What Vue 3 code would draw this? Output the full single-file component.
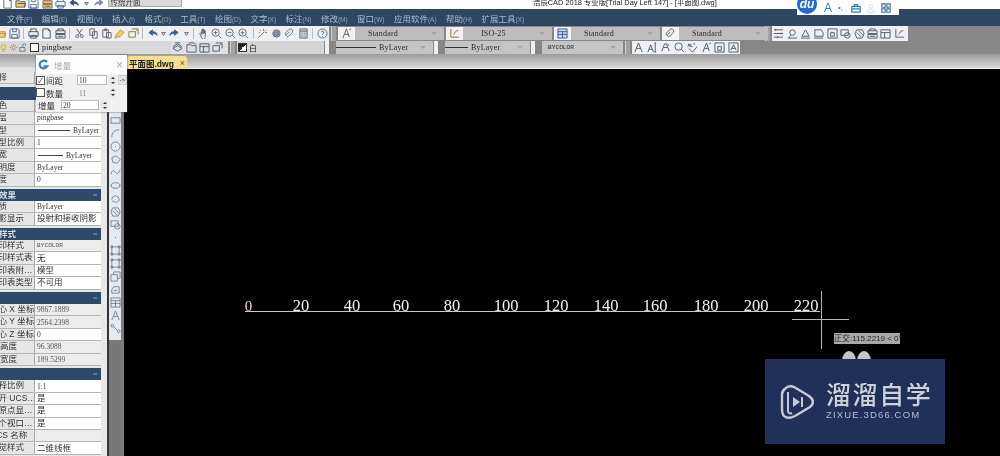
<script setup>
import { h } from 'vue'

// small toolbar glyphs, all on a 12x12 box
const paths = {
  open: 'M1 3h4l1 1h5v6H1zM3 6h9l-2 4',
  save: 'M2 1h8l1 1v9H1V2zM4 1v3h4V1M3 7h6v4H3z',
  print: 'M3 4V1h6v3M1 4h10v5H1zM3 8h6v3H3z',
  doc: 'M2 1h6l2 2v8H2zM8 1v2h2',
  plot: 'M3 3V1h6v2M1 3h10v3H1zM1 7h10v4H1zM3 9h6',
  cut: 'M3 1l5 7M9 1L4 8M2 9a1.5 1.5 0 1 0 3 0a1.5 1.5 0 1 0-3 0M7 9a1.5 1.5 0 1 0 3 0a1.5 1.5 0 1 0-3 0',
  copy: 'M2 1h5v7H2zM5 4h5v7H5z',
  paste: 'M2 2h6v8H2zM4 1h2v2H4zM6 5h5v6H6z',
  brush: 'M2 8l5-6 4 3-5 5zM2 8l-1 3 3-1',
  block: 'M1 4h7v6H1zM4 1h7v6M8 4l2-2',
  undo: 'M2 5l4-3v2c3 0 5 1 5 4c-1-2-3-2-5-2v2z',
  redo: 'M10 5L6 2v2C3 4 1 5 1 8c1-2 3-2 5-2v2z',
  dd: 'M4 5h4L6 8z',
  hand: 'M4 11L2 6l1-1 1 2V2h1v4-5h1v5-4h1v4-3h1v6l-1 4z',
  zoom: 'M1 5a4 4 0 1 0 8 0a4 4 0 1 0-8 0M8 8l3 3M3 5h4M5 3v4',
  zoomb: 'M1 5a4 4 0 1 0 8 0a4 4 0 1 0-8 0M8 8l3 3M3 5h4',
  wand: 'M1 11L8 4M7 1v2M10 2L9 3M11 5H9M3 2l1 1M2 5h1',
  gear: 'M2 6a4 4 0 1 0 8 0a4 4 0 1 0-8 0M4 6a2 2 0 1 0 4 0a2 2 0 1 0-4 0',
  link: 'M2 8a2 2 0 0 1 0-3l3-3a2 2 0 0 1 4 3l-4 4a1 1 0 0 1-2-2l3-3',
  calc: 'M2 1h8v10H2zM2 3.5h8M4 6h1M7 6h1M4 8.5h1M7 8.5h1',
  help: 'M1 6a5 5 0 1 0 10 0a5 5 0 1 0-10 0M4.5 4.5C5 3 8 3 7.5 5C7 6 6 6 6 7.5M6 9v.6',
  layer: 'M1 7l5-3 5 3-5 3zM1 5l5-3 5 3M3 1h6',
  folder: 'M1 3h4l1 1h5v7H1zM3 1h6l2 2',
  sheet: 'M1 2h10v9H1zM1 5h10M5 5v6',
  dim: 'M1 2h10M1 6h10M1 10h10M3 1v2M9 5v2M5 9v2',
  dimb: 'M3 5a3 3 0 1 0 6 0a3 3 0 1 0-6 0M1 11h10M4 8L2 11',
  tri: 'M2 9l4-7 4 7zM1 11h10',
  rect: 'M2 2h7l2 3v4H2zM1 11h10',
  text: 'M2 11L6 1l4 10M3.5 7h5',
  textb: 'M1 11L4 3l3 8M2 8h4M9 1v10M8 1h2M8 11h2',
  textr: 'M2 10L5 2h2l3 8M4 6h4M8 2l2 2',
  find: 'M1 5a4 4 0 1 0 8 0a4 4 0 1 0-8 0M8 8l3 3',
  abc: 'M1 5l1-3 1 3M4 2v3h2M7 2h2M2 7l4 4 5-6',
  box: 'M1 1h10v10H1zM4 5h4v4H4z',
  boxa: 'M1 1h10v10H1zM3 9l3-6 3 6M4 7h4',
  axis: 'M2 1v9h9M5 7l3-4M8 3h2',
  line: 'M2 10C2 5 5 2 10 2',
  wrect: 'M1 3h10v6H1z',
  circle: 'M1 6a5 5 0 1 0 10 0a5 5 0 1 0-10 0M5.5 6h1',
  poly: 'M2 4l5-2 4 4-3 4-5-1z',
  spline: 'M1 8c2-6 3-4 5-2s3 2 5-3',
  ellipse: 'M1 6c0-4 10-4 10 0s-10 4-10 0M1 6h1M10 6h1',
  arc: 'M2 7c0-5 8-5 8 0c0 3-4 4-6 2M2 9l2 0',
  hatch: 'M3 2h6l2 4-2 5H3L1 6zM3 5l5 5M5 3l5 5',
  region: 'M1 2h8v6H1zM5 8a3 3 0 1 0 6 0a3 3 0 1 0-6 0',
  dot: 'M5.5 6h1M6 5.5v1',
  hatchb: 'M2 2h8v8H2zM1 1h2v2H1zM9 1h2v2H9zM1 9h2v2H1zM9 9h2v2H9z',
  stack: 'M1 4h7v7H1zM4 1h7v7H8M4 4V1',
  draw: 'M2 6l2-3h6v7H2zM4 7h4',
  table: 'M1 1h10v10H1zM1 4h10M6 4v7M1 7h10',
  nodes: 'M1 3a1.5 1.5 0 1 0 3 0a1.5 1.5 0 1 0-3 0M8 9a1.5 1.5 0 1 0 3 0a1.5 1.5 0 1 0-3 0M4 4l4 4',
  style: 'M2 11L6 1M6 1l3 9M4 7h4M9 2l2-1',
  bulb: 'M3 5a3 3 0 1 1 6 0c0 2-1 2-1 4H4c0-2-1-2-1-4M4.5 11h3',
  sun: 'M4 6a2 2 0 1 0 4 0a2 2 0 1 0-4 0M6 1v2M6 9v2M1 6h2M9 6h2M2.5 2.5L4 4M8 8l1.5 1.5M9.5 2.5L8 4M4 8L2.5 9.5',
  lock: 'M1 6h7v5H1zM5 6V3a2 2 0 0 1 4 0v1',
  grid: 'M1 1h4v4H1zM7 1h4v4H7zM1 7h4v4H1zM7 7h4v4H7z',
  bag: 'M1 4h10v7H1zM4 4V2h4v2M1 7h10',
  person: 'M4 4a2 2 0 1 0 4 0a2 2 0 1 0-4 0M2 11c0-5 8-5 8 0z'
}

const blue = '#4c6c92'
const grey = '#5c6068'

const Ic = (p) => h('svg', { class: 'ic', viewBox: '0 0 12 12', width: p.s || 11, height: p.s || 11 }, [
  h('path', { d: paths[p.n], fill: p.f || 'none', stroke: p.c || grey, 'stroke-width': p.w || 1 })
])
Ic.props = ['n', 'c', 'f', 's', 'w']

const quick = [
  { n: 'doc' }, { n: 'open', f: '#e9c86a' }, { n: 'save', c: blue }, { n: 'plot', c: '#8a6a3c', f: '#d9c68c' },
  { n: 'print', c: blue }, { n: 'undo', c: '#2f4f7f', f: '#2f4f7f' }, { n: 'dd' }, { n: 'redo', c: '#8090a8', f: '#8090a8' }
]

const row1Left = [
  [{ n: 'open', c: '#c09030', f: '#eccf7e' }, { n: 'save', c: blue }],
  [{ n: 'print', c: '#47515c' }, { n: 'doc', c: '#47515c' }, { n: 'plot', c: '#47515c' }],
  [{ n: 'cut' }, { n: 'copy' }, { n: 'paste' }, { n: 'brush', c: '#c6a02c', f: '#eccf5e' }, { n: 'block', c: '#8a7a3c' }],
  [{ n: 'undo', c: '#3c5f8c', f: '#3c5f8c' }, { n: 'dd', narrow: 1 }, { n: 'redo', c: '#3c5f8c', f: '#3c5f8c' }, { n: 'dd', narrow: 1 }],
  [{ n: 'hand', c: '#5a6f8c' }, { n: 'zoom', c: '#5a6f8c' }, { n: 'zoomb', c: '#5a6f8c' }, { n: 'zoom', c: '#5a6f8c' }],
  [{ n: 'wand', c: '#7a6a4c' }, { n: 'gear', c: '#5a6f8c', f: '#93a4ba' }, { n: 'link', c: '#5a6f8c' }, { n: 'calc', c: '#5a6f8c', f: '#c4ccd6' }],
  [{ n: 'help', c: '#4a6a8a' }]
]

const row1Dim = ['dim', 'dimb', 'tri', 'rect', 'box', 'region', 'hatch', 'plot', 'sheet', 'axis']
const row2Layer = ['layer', 'folder', 'sheet', 'block']
const row2Text = ['text', 'textb', 'textr', 'find', 'abc', 'style', 'box', 'boxa']
const strip = ['wrect', 'line', 'circle', 'poly', 'spline', 'ellipse', 'arc', 'hatch', 'region', 'dot', 'hatchb', 'hatchb', 'stack', 'draw', 'table', 'text', 'nodes']

const menus = [
  ['文件', 'F'], ['编辑', 'E'], ['视图', 'V'], ['插入', 'I'], ['格式', 'O'], ['工具', 'T'], ['绘图', 'D'],
  ['文字', 'X'], ['标注', 'N'], ['修改', 'M'], ['窗口', 'W'], ['应用软件', 'A'], ['帮助', 'H'], ['扩展工具', 'X']
]

const props = [
  { head: 1 },
  { k: '颜色', v: '' },
  { k: '图层', v: 'pingbase', sb: 1 },
  { k: '线型', v: 'ByLayer', ln: 32 },
  { k: '线型比例', v: '1' },
  { k: '线宽', v: 'ByLayer', ln: 25 },
  { k: '透明度', v: 'ByLayer' },
  { k: '厚度', v: '0' },
  { head: 1, k: '效果', gap: 1 },
  { k: '材质', v: 'ByLayer' },
  { k: '阴影显示', v: '投射和接收阴影' },
  { head: 1, k: '样式', gap: 1 },
  { k: '打印样式', v: 'BYCOLOR', off: 1, caps: 1 },
  { k: '打印样式表', v: '无' },
  { k: '打印表附…', v: '模型' },
  { k: '打印表类型', v: '不可用' },
  { head: 1, gap: 1 },
  { k: '圆心 X 坐标', v: '9867.1889', off: 1 },
  { k: '圆心 Y 坐标', v: '2564.2398', off: 1 },
  { k: '圆心 Z 坐标', v: '0' },
  { k: '高度', v: '96.3088', flush: 1, off: 1 },
  { k: '宽度', v: '189.5299', flush: 1, off: 1 },
  { head: 1, gap: 1 },
  { k: '注释比例', v: '1:1', small: 1 },
  { k: '打开 UCS…', v: '是' },
  { k: '在原点显…', v: '是' },
  { k: '每个视口…', v: '是' },
  { k: 'UCS 名称', v: '', off: 1 },
  { k: '视觉样式', v: '二维线框' }
]

const ruler = [
  ['20', 301], ['40', 352], ['60', 401], ['80', 452], ['100', 506], ['120', 556],
  ['140', 606], ['160', 655], ['180', 706], ['200', 756], ['220', 806]
]
</script>

<template>
  <div class="app">
    <div class="titlebar">
      <div class="quick">
        <span v-for="(q, i) in quick" :key="i" class="slot"><Ic v-bind="q" /></span>
        <span class="qcombo">传统开面</span>
      </div>
      <div class="title">浩辰CAD 2018 专业版[Trial Day Left 147] - [平面图.dwg]</div>
    </div>

    <div class="menu">
      <span v-for="m in menus" :key="m[0]" class="menu-item">{{ m[0] }}<small>({{ m[1] }})</small></span>
    </div>

    <div class="bar bar1">
      <div class="tools left-tools">
        <template v-for="(g, i) in row1Left" :key="i">
          <span v-for="(t, j) in g" :key="j" class="slot" :class="{ narrow: t.narrow }"><Ic v-bind="t" /></span>
          <i v-if="i < row1Left.length - 1" class="sep"></i>
        </template>
      </div>
      <i class="grip"></i>
      <div class="combo-set">
        <span class="cicon"><Ic n="style" c="#5a5a5a" /></span>
        <span class="combo w88">Standard</span>
        <span class="cicon"><Ic n="axis" c="#8a6a2c" /></span>
        <span class="combo w88 iso">ISO-25</span>
        <span class="cicon"><Ic n="table" c="#3a5a9a" f="#c8d6ea" /></span>
        <span class="combo w88">Standard</span>
        <span class="cicon"><Ic n="link" c="#5a6068" /></span>
        <span class="combo w88">Standard</span>
      </div>
      <i class="grip"></i>
      <div class="tools dim-tools">
        <span v-for="(n, i) in row1Dim" :key="i" class="slot"><Ic :n="n" c="#4a5a6c" /></span>
      </div>
    </div>

    <div class="bar bar2">
      <div class="layer-combo">
        <Ic n="bulb" c="#c6a02c" f="#f0dc78" :s="9" />
        <Ic n="sun" c="#9a8a3c" :s="9" />
        <Ic n="lock" c="#4c6c92" :s="9" />
        <b class="sq"></b>
        <span class="serif">pingbase</span>
      </div>
      <div class="tools layer-tools">
        <span v-for="n in row2Layer" :key="n" class="slot"><Ic :n="n" c="#4a5a6c" /></span>
      </div>
      <i class="grip"></i>
      <div class="color-combo"><b class="sq half"></b><span>白</span></div>
      <i class="notch"></i>
      <span class="combo line-combo w104"><u></u>ByLayer</span>
      <i class="notch"></i>
      <span class="combo line-combo w86"><u class="short"></u>ByLayer</span>
      <i class="notch"></i>
      <span class="combo by">BYCOLOR</span>
      <i class="grip"></i>
      <div class="tools text-tools">
        <span v-for="(n, i) in row2Text" :key="i" class="slot"><Ic :n="n" c="#4a5a6c" /></span>
      </div>
    </div>

    <div class="tabrow">
      <div class="tab"><span>平面图.dwg</span><em>×</em></div>
    </div>

    <div class="body">
      <div class="props">
        <div class="prow sel"><span class="k">选择</span><span class="v"></span></div>
        <template v-for="(p, i) in props" :key="i">
          <div v-if="p.head" class="phead" :class="{ gap: p.gap }"><span>{{ p.k }}</span><i></i></div>
          <div v-else class="prow">
            <span class="k" :class="{ flush: p.flush }">{{ p.k }}</span>
            <span class="v" :class="{ off: p.off, latin: /^[\x00-\x7f]*$/.test(p.v), caps: p.caps }">
              <u v-if="p.ln" :style="{ width: p.ln + 'px' }"></u>{{ p.v }}
            </span>
          </div>
        </template>
      </div>
      <div class="side">
        <div class="strip">
          <span v-for="(n, i) in strip" :key="i"><Ic :n="n" c="#66788c" :w="0.9" /></span>
        </div>
      </div>
      <div class="canvas">
        <svg class="drawing" width="876" height="387" viewBox="124 69 876 387">
          <line x1="245" y1="311.5" x2="820" y2="311.5" stroke="#c8c8c8" />
          <text x="248.5" y="311" class="num zero" text-anchor="middle">0</text>
          <text v-for="r in ruler" :key="r[0]" :x="r[1]" y="311" class="num" text-anchor="middle">{{ r[0] }}</text>
          <path d="M821.5 291v58M792 319.5h57" stroke="#b4b4b4" fill="none" />
          <ellipse cx="849" cy="361" rx="7" ry="10" fill="#c2c3c8" />
          <ellipse cx="864" cy="361" rx="7" ry="10" fill="#c2c3c8" />
        </svg>
        <div class="tip">正交:115.2219 &lt; 0°</div>
        <div class="mark">
          <svg class="mark-logo" width="35" height="36" viewBox="0 0 35 36" fill="none" stroke="#c6cad4">
            <path stroke-width="2.4" d="M6 4C9 1 12 2 15 3.5L29 12c5 3.5 5 8 1 11L15 32c-4 2-8 3-11 0C2 30 2 27 2 24V10C2 8 3 6 6 4z" />
            <path stroke-width="2" d="M8 8v19c0 2 2 3 4 2" />
            <path fill="#c6cad4" stroke="none" d="M13 13l7 5-7 5zM21 13h2v10h-2z" />
          </svg>
          <div class="mark-text">
            <div class="mark-cn">溜溜自学</div>
            <div class="mark-en">ZIXUE.3D66.COM</div>
          </div>
        </div>
      </div>
    </div>

    <div class="dialog">
      <div class="dlg-title">
        <svg width="11" height="11" viewBox="0 0 12 12" fill="none" stroke="#2b87c9" stroke-width="2.4"><path d="M10 3C6 0 1 3 2 7s6 4 8 1H6" /></svg>
        <span>增量</span>
        <em>×</em>
      </div>
      <div class="dlg-row">
        <b class="cb on">✓</b><label>间距</label>
        <span class="input">10</span><i class="spin"></i><span class="go">-&gt;</span>
      </div>
      <div class="dlg-row">
        <b class="cb"></b><label>数量</label>
        <span class="input ghost">11</span><i class="spin"></i>
      </div>
      <div class="dlg-row">
        <label class="plain">增量</label>
        <span class="input wide">20</span><i class="spin"></i>
      </div>
    </div>

    <div class="ime">
      <span class="du">du</span>
      <span class="ime-a">A</span>
      <span class="ime-dot">•,</span>
      <Ic n="bag" c="#2f7fb8" :s="10" :w="1.4" />
      <Ic n="person" c="#c9d6e0" :s="10" />
      <Ic n="grid" c="#3c6e9c" :s="10" :w="1.3" />
    </div>
  </div>
</template>

<style>
html, body { background: #000; overflow: hidden; }
</style>

<style scoped>
.app {
  position: relative;
  width: 1000px;
  height: 456px;
  overflow: hidden;
  display: flex;
  flex-direction: column;
  background: #000;
  font-family: "Liberation Sans", "Noto Sans CJK SC", sans-serif;
  filter: blur(0.35px);
}
.ic { display: block; flex: none; }
.serif { font-family: "Liberation Serif", serif; font-size: 8px; color: #222; letter-spacing: .2px; }

.titlebar {
  height: 9px;
  flex: none;
  background: #fff;
  overflow: hidden;
  position: relative;
}
.quick {
  display: flex;
  align-items: center;
  height: 7px;
  padding-left: 1px;
}
.quick .slot { width: 13.2px; }
.qcombo {
  margin-left: 1px;
  width: 74px;
  height: 7px;
  flex: none;
  box-sizing: border-box;
  background: #d8d8d8;
  border: 1px solid #aaa;
  border-top: 0;
  font-size: 7.5px;
  line-height: 5px;
  color: #333;
  padding-left: 2px;
  overflow: hidden;
}
.title {
  position: absolute;
  left: 533px;
  top: -3px;
  font-size: 7.4px;
  line-height: 11px;
  color: #222;
  white-space: nowrap;
}

.menu {
  height: 17px;
  flex: none;
  background: #2d4762;
  display: flex;
  align-items: center;
  gap: 9.4px;
  padding-left: 7px;
  color: #a9bccf;
  font-size: 8.5px;
  white-space: nowrap;
}
.menu-item small { font-size: 6.5px; opacity: .8; }

.bar {
  flex: none;
  display: flex;
  align-items: center;
  background: #878787;
}
.bar1 { height: 15px; }
.bar2 { height: 13px; }
.tools {
  display: flex;
  align-items: center;
  height: 100%;
  background: #eef0f3;
}
.slot {
  width: 13.4px;
  flex: none;
  display: flex;
  justify-content: center;
}
.slot.narrow { width: 9px; }
.sep {
  width: 6px;
  height: 11px;
  flex: none;
  background: linear-gradient(#bbb, #bbb) center / 1px 100% no-repeat;
}
.left-tools { width: 335px; margin-left: -6px; flex: none; overflow: hidden; }
.grip {
  width: 5px;
  height: 100%;
  flex: none;
  margin: 0 2px;
  background: #a2a2a2;
  border-left: 1px solid #cfcfcf;
  box-sizing: border-box;
}
.combo-set { display: flex; height: 100%; align-items: center; width: 425px; flex: none; }
.cicon {
  width: 17px;
  height: 13px;
  flex: none;
  background: #f2f2f2;
  display: flex;
  align-items: center;
  justify-content: center;
}
.combo {
  position: relative;
  height: 13px;
  flex: none;
  background: #bdbdbd;
  color: #2a2a2a;
  font-family: "Liberation Serif", serif;
  font-size: 8px;
  letter-spacing: .2px;
  line-height: 13px;
  white-space: nowrap;
  box-sizing: border-box;
  padding-left: 13px;
}
.combo::after {
  content: "";
  position: absolute;
  right: 7px;
  top: 5px;
  border: 3px solid transparent;
  border-top-color: #a4a4a4;
}
.w88 { width: 89px; margin-right: 2px; }
.iso { padding-left: 18px; }
.dim-tools { width: 136px; flex: none; }

.layer-combo {
  width: 172px;
  flex: none;
  height: 100%;
  display: flex;
  align-items: center;
  gap: 1px;
  background: #d9d9d9;
  margin-left: -1px;
}
.sq {
  width: 7px;
  height: 7px;
  margin: 0 2px 0 1px;
  border: 1px solid #333;
  background: #fff;
  flex: none;
}
.sq.half { background: linear-gradient(135deg, #222 50%, #fff 50%); }
.layer-tools { width: 57px; flex: none; background: #dfe1e4; }
.color-combo {
  width: 87px;
  flex: none;
  height: 100%;
  display: flex;
  align-items: center;
  background: #d4d4d4;
  font-size: 8px;
  color: #222;
}
.notch {
  width: 4px;
  height: 100%;
  flex: none;
  margin: 0 7px 0 1px;
  background: #f0f0f0;
}
.line-combo {
  display: flex;
  align-items: center;
  gap: 3px;
  padding-left: 0;
  background: #c4c4c4;
}
.line-combo u {
  width: 40px;
  border-top: 1px solid #333;
  flex: none;
}
.line-combo u.short { width: 23px; }
.w104 { width: 97px; }
.w86 { width: 85px; }
.by {
  width: 81px;
  padding-left: 6px;
  background: #c4c4c4;
  font-family: "Liberation Mono", monospace;
  font-size: 6.2px;
  letter-spacing: 0;
}
.text-tools { width: 108px; flex: none; }
.text-tools .slot { width: 13.5px; }

.tabrow {
  height: 15px;
  flex: none;
  display: flex;
  align-items: flex-end;
  padding-left: 127px;
  background: linear-gradient(#9c9c9c, #d2d2d2 85%, #efefef);
}
.tab {
  width: 60px;
  height: 13px;
  display: flex;
  align-items: center;
  justify-content: space-between;
  padding: 0 2px;
  box-sizing: border-box;
  background: #f6de90;
  border-radius: 3px 3px 0 0;
  color: #1c1c1c;
  font-size: 8.5px;
  font-weight: 700;
  white-space: nowrap;
}
.tab em { font-style: normal; font-weight: 400; color: #555; font-size: 9px; }

.body { flex: 1; display: flex; min-height: 0; }
.props {
  width: 101px;
  flex: none;
  padding-top: 3px;
  background: #e6e6e6;
  overflow: hidden;
  font-size: 8.5px;
  color: #333;
  box-sizing: border-box;
}
.prow {
  height: 12.4px;
  display: flex;
  box-sizing: border-box;
  border-bottom: 1px solid #b4b4b4;
  line-height: 11px;
  white-space: nowrap;
}
.prow.sel { margin-bottom: 3px; background: #ddd; }
.k {
  width: 34px;
  flex: none;
  overflow: hidden;
  text-indent: -10px;
  background: #e6e6e6;
  border-right: 1px solid #a8a8a8;
}
.k.flush { text-indent: 0; }
.v {
  flex: 1;
  min-width: 0;
  padding-left: 2px;
  overflow: hidden;
  background: #fff;
  display: flex;
  align-items: center;
}
.v.latin { font-family: "Liberation Serif", serif; font-size: 7.5px; }
.v.caps { font-family: "Liberation Mono", monospace; font-size: 6.2px; }
.v.off { background: #ececec; color: #555; }
.v u {
  display: block;
  height: 0;
  margin: 0 3px 0 1px;
  border-top: 1px solid #444;
  flex: none;
}
.phead {
  height: 12.4px;
  background: #2e4a6a;
  color: #d4dde8;
  font-size: 8.5px;
  line-height: 12px;
  font-weight: 700;
  text-indent: -1px;
  display: flex;
  justify-content: space-between;
  align-items: center;
  overflow: hidden;
}
.phead.gap { margin-top: 2px; }
.phead i {
  width: 4px;
  height: 2px;
  margin-right: 4px;
  background: #5a7490;
}

.side {
  width: 23px;
  flex: none;
  display: flex;
  background: #e8e8e8;
}
.strip {
  width: 14px;
  margin-left: 6px;
  height: 100%;
  box-sizing: border-box;
  padding-top: 45.5px;
  background: linear-gradient(#e6eaf0 271px, #787878 271px);
  border-left: 2px solid #333;
  display: flex;
  flex-direction: column;
  align-items: center;
  gap: 2.06px;
  box-shadow: 3px 0 0 #7d7d7d;
}

.canvas {
  position: relative;
  flex: 1;
  background: #000;
  overflow: hidden;
}
.drawing { position: absolute; left: 0; top: 0; }
.num {
  font-family: "Liberation Serif", serif;
  font-size: 16.5px;
  fill: #f2f2f2;
}
.zero { fill: #f0d4d4; font-size: 15px; }
.tip {
  position: absolute;
  left: 710px;
  top: 264px;
  height: 11px;
  width: 66px;
  background: #a8a8a8;
  color: #222;
  font-size: 8px;
  line-height: 11px;
  white-space: nowrap;
  text-align: center;
}
.mark {
  position: absolute;
  left: 641px;
  top: 290px;
  width: 180px;
  height: 85px;
  box-sizing: border-box;
  padding: 24px 0 0 15px;
  background: #1f3059;
  display: flex;
  gap: 11px;
}
.mark-logo { flex: none; margin-top: 1px; }
.mark-text { color: #cdd1da; }
.mark-cn {
  font-size: 25px;
  line-height: 25px;
  height: 26px;
  overflow: hidden;
  letter-spacing: 1.6px;
  font-weight: 500;
  white-space: nowrap;
}
.mark-en {
  font-family: "Liberation Sans", sans-serif;
  font-size: 9.5px;
  line-height: 12px;
  letter-spacing: 1.15px;
  white-space: nowrap;
  color: #b6bbc8;
}

/* floating increment dialog, sits over the panel */
.dialog {
  position: absolute;
  left: 36px;
  top: 55px;
  width: 91px;
  height: 57px;
  background: #f0f0f0;
  box-shadow: 0 0 2px #555;
  font-size: 8.5px;
  color: #333;
}
.dlg-title {
  height: 19px;
  background: #fdfdfd;
  display: flex;
  align-items: center;
  gap: 5px;
  padding-left: 2px;
  color: #aaa;
}
.dlg-title em {
  margin-left: auto;
  margin-right: 4px;
  font-style: normal;
  font-size: 12px;
  color: #aaa;
}
.dlg-row {
  height: 12.6px;
  display: flex;
  align-items: center;
}
.cb {
  width: 7px;
  height: 7px;
  border: 1px solid #555;
  background: #fff;
  font-size: 7px;
  line-height: 7px;
  font-weight: 400;
  text-align: center;
  flex: none;
}
.dlg-row label { width: 31px; margin-left: 1px; flex: none; }
.dlg-row label.plain { width: 31px; margin-left: 2px; }
.input {
  width: 30px;
  height: 10px;
  flex: none;
  background: #fff;
  border: 1px solid #bbb;
  box-sizing: border-box;
  font-family: "Liberation Serif", serif;
  font-size: 7.5px;
  line-height: 9px;
  padding-left: 1px;
}
.input.ghost { background: none; border-color: transparent; color: #888; }
.input.wide { width: 38px; margin-left: -8px; }
.spin {
  position: relative;
  width: 7px;
  height: 9px;
  margin-left: 2px;
  flex: none;
  background: #e8e8e8;
}
.spin::before, .spin::after {
  content: "";
  position: absolute;
  left: 1.5px;
  border: 2px solid transparent;
}
.spin::before { top: -1px; border-bottom-color: #333; }
.spin::after { bottom: -1px; border-top-color: #333; }
.go {
  width: 9px;
  height: 10px;
  margin-left: 2px;
  background: #e4e4e4;
  border: 1px solid #ccc;
  box-sizing: border-box;
  font-size: 6px;
  line-height: 8px;
  text-align: center;
  white-space: nowrap;
  overflow: hidden;
}

/* input method bar floating over the title */
.ime {
  position: absolute;
  left: 797px;
  top: 0;
  width: 102px;
  height: 15px;
  background: #fff;
  display: flex;
  align-items: center;
  gap: 5px;
}
.du {
  width: 20px;
  height: 20px;
  margin-top: -7px;
  margin-right: 2px;
  border-radius: 50%;
  background: #2468d8;
  color: #fff;
  font-family: "Liberation Sans", sans-serif;
  font-size: 12px;
  font-style: italic;
  font-weight: 700;
  line-height: 20px;
  text-align: center;
  flex: none;
}
.ime-a { font-family: "Liberation Sans", sans-serif; font-size: 12px; color: #2f7fb8; }
.ime-dot { font-size: 8px; color: #2f7fb8; margin: 0 3px 0 1px; }
</style>
